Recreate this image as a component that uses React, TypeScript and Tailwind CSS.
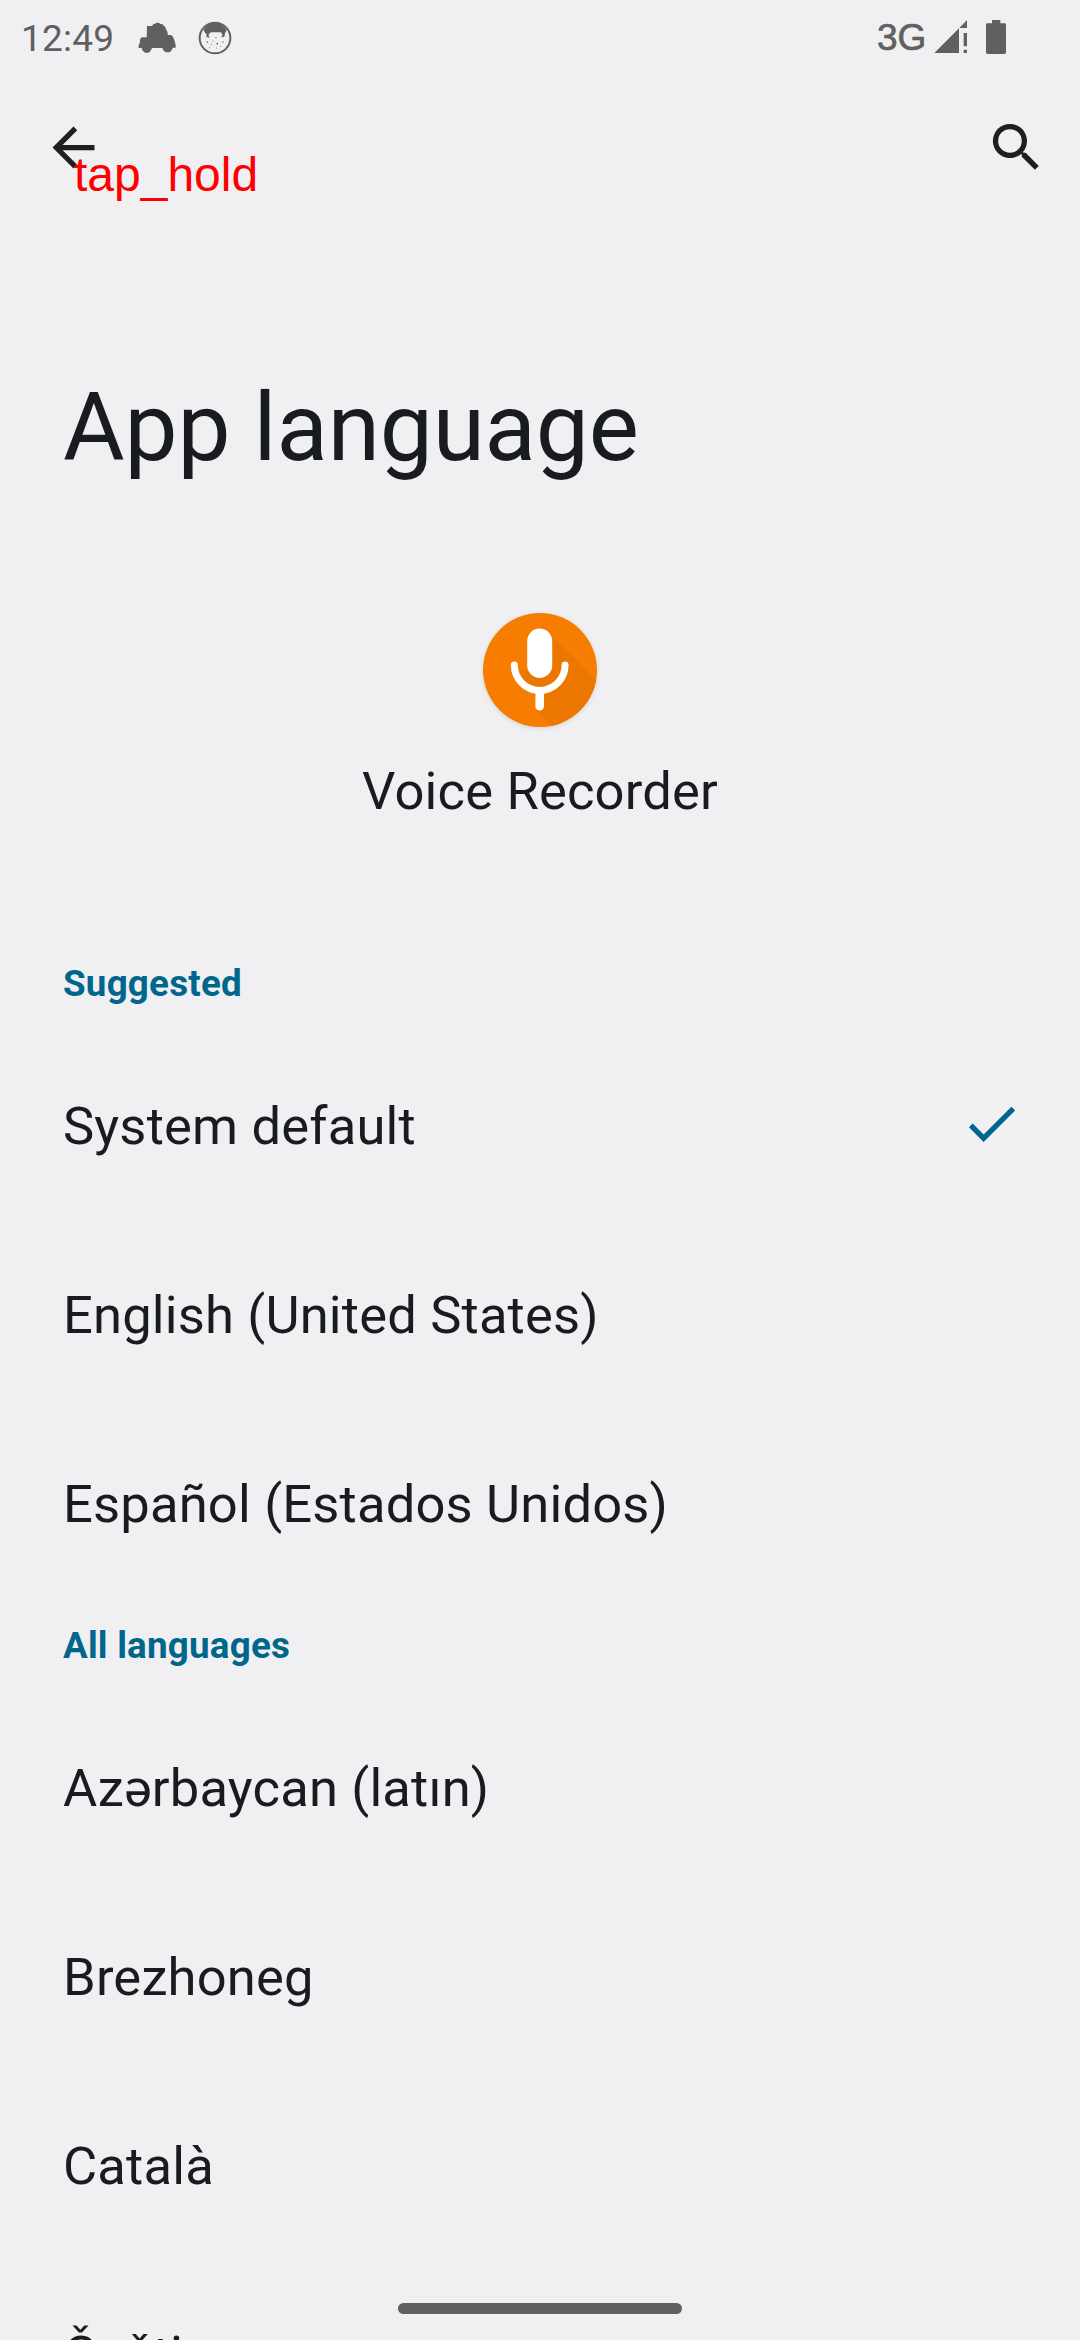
const Row = ({ t, on }: { t: string; on?: boolean }) => (
  <div className="flex h-[189px] shrink-0 items-center justify-between pl-[63px] pr-[57px] text-[52.5px] leading-[62px] tracking-[0.18px]">
    <span>{t}</span>
    {on && (
      <svg className="mb-[4px] size-[63px]" viewBox="0 0 24 24" fill="#00668b">
        <path d="M9 16.17 4.83 12l-1.42 1.41L9 19 21 7l-1.41-1.41z" />
      </svg>
    )}
  </div>
);

const Head = ({ t }: { t: string }) => (
  <h2 className="mb-[24px] h-[47px] shrink-0 pl-[63px] text-[36.75px] font-bold leading-[47px] tracking-[0.22px] text-[#00668b]">{t}</h2>
);

const StatusBar = () => (
  <div className="flex h-[76px] shrink-0 items-start pl-[21px] pr-[65px] text-[37px] text-[#606060]">
    <span className="mt-[17px] w-[109px] leading-[43px] tracking-[0.2px]">12:49</span>
    <svg className="mt-[14px] h-[46px] w-[50px]" viewBox="0 0 150 138" fill="currentColor">
      <path d="M51 36h15l5-7h5l3-3h8l3 4h7l4 6h3l7 16 2 4v7h10l5 4 5 11 4 16v7h-9l-3 8-6 6h-12l-6-5-4-8H66l-4 8-6 6H45l-7-6-3-8h-9v-8l4-9v-9l5-6h15z" />
    </svg>
    <svg className="ml-[10px] mt-[14px] h-[46px] w-[50px]" viewBox="0 0 150 138" fill="currentColor">
      <circle cx="75" cy="72" r="46" fill="none" stroke="currentColor" strokeWidth="6" />
      <path d="M40 48Q52 26 75 26t35 22l-6 12-5 3-7-8H63l-9 7-8-4z" />
      <g>
        <path d="M50 60h6v7l3 3-4 1-6-3zM97 60h7v7l-5 3-6-1 4-3z" />
        <circle cx="78" cy="71" r="2" /><circle cx="52" cy="84" r="2.5" /><circle cx="69" cy="81" r="1.5" />
        <circle cx="82" cy="89" r="2.5" /><circle cx="64" cy="90" r="1.5" /><circle cx="99" cy="84" r="2" />
        <circle cx="80" cy="102" r="1.5" /><circle cx="59" cy="101" r="1.5" /><circle cx="92" cy="97" r="1.5" />
      </g>
    </svg>
    <span className="ml-auto mt-[17px] w-[48px] font-['Liberation_Sans',sans-serif] leading-[41px] [-webkit-text-stroke:0.7px_#606060]">3G</span>
    <svg className="mt-[14px] h-[46px] w-[90px]" viewBox="0 0 270 138" fill="currentColor">
      <path d="M28 117L102 43V117zM103 42l23-24v24zM116 57h10v40h-10zM116 107h10v10h-10zM201 18h25v10h13q4 0 4 4v83q0 5-5 5h-50q-5 0-5-5V32q0-4 4-4h14z" />
    </svg>
  </div>
);

export default function App() {
  return (
    <div className="relative flex h-[2340px] w-[1080px] flex-col overflow-hidden bg-[#f0f0f2] font-['Roboto',sans-serif] text-[#191c1e]">
      <StatusBar />
      <div className="flex h-[142px] shrink-0 items-center justify-between pl-[42px] pr-[32px] text-[#1f1f1f]">
        <svg className="size-[63px]" viewBox="0 0 24 24" fill="currentColor"><path d="M20 11H7.83l5.59-5.59L12 4l-8 8 8 8 1.41-1.41L7.83 13H20z" /></svg>
        <svg className="size-[63px]" viewBox="0 0 24 24" fill="currentColor"><path d="M15.5 14h-.79l-.28-.27A6.47 6.47 0 0 0 16 9.5 6.5 6.5 0 1 0 9.5 16c1.61 0 3.09-.59 4.23-1.57l.27.28v.79l5 4.99L20.49 19zm-6 0a4.5 4.5 0 1 1 0-9 4.5 4.5 0 0 1 0 9" /></svg>
      </div>
      <h1 className="mt-[150px] shrink-0 pl-[63px] text-[94.5px] leading-[119px] tracking-[-0.15px]">App language</h1>
      <div className="mt-[125px] flex h-[210px] shrink-0 flex-col items-center">
        <svg className="size-[116px] overflow-visible drop-shadow-[0_1px_2px_rgba(0,0,0,0.12)]" viewBox="0 0 116 116">
          <clipPath id="disc"><circle cx="58" cy="58" r="57" /></clipPath>
          <circle cx="58" cy="58" r="57" fill="#f77d00" />
          <path clipPath="url(#disc)" fill="#ec7700" d="M67 21L120 74V120H76L54 98V86L36 58 50 60z" />
          <rect x="45.2" y="16.5" width="25" height="49.5" rx="12.5" fill="#fff" />
          <path d="M32.3 53a25.4 25.4 0 0 0 50.8 0" stroke="#fff" strokeWidth="7" strokeLinecap="round" fill="none" />
          <path d="M57.7 80v14.2" stroke="#fff" strokeWidth="8.6" strokeLinecap="round" />
        </svg>
        <div className="mt-[32px] text-[52.5px] leading-[62px] tracking-[0.18px]">Voice Recorder</div>
      </div>
      <div className="flex shrink-0 flex-col pt-[138px]">
        <Head t="Suggested" />
        <Row t="System default" on />
        <Row t="English (United States)" />
        <Row t="Español (Estados Unidos)" />
      </div>
      <div className="flex shrink-0 flex-col pt-[24px]">
        <Head t="All languages" />
        <Row t="Azərbaycan (latın)" />
        <Row t="Brezhoneg" />
        <Row t="Català" />
        <Row t="Čeština" />
      </div>
      <span className="absolute left-[74px] top-[148px] font-['Liberation_Sans',sans-serif] text-[48px] leading-[54px] text-[#ff0000]">tap_hold</span>
      <div className="absolute left-[398px] top-[2303px] h-[10.5px] w-[284px] rounded-full bg-[#606060]" />
    </div>
  );
}
